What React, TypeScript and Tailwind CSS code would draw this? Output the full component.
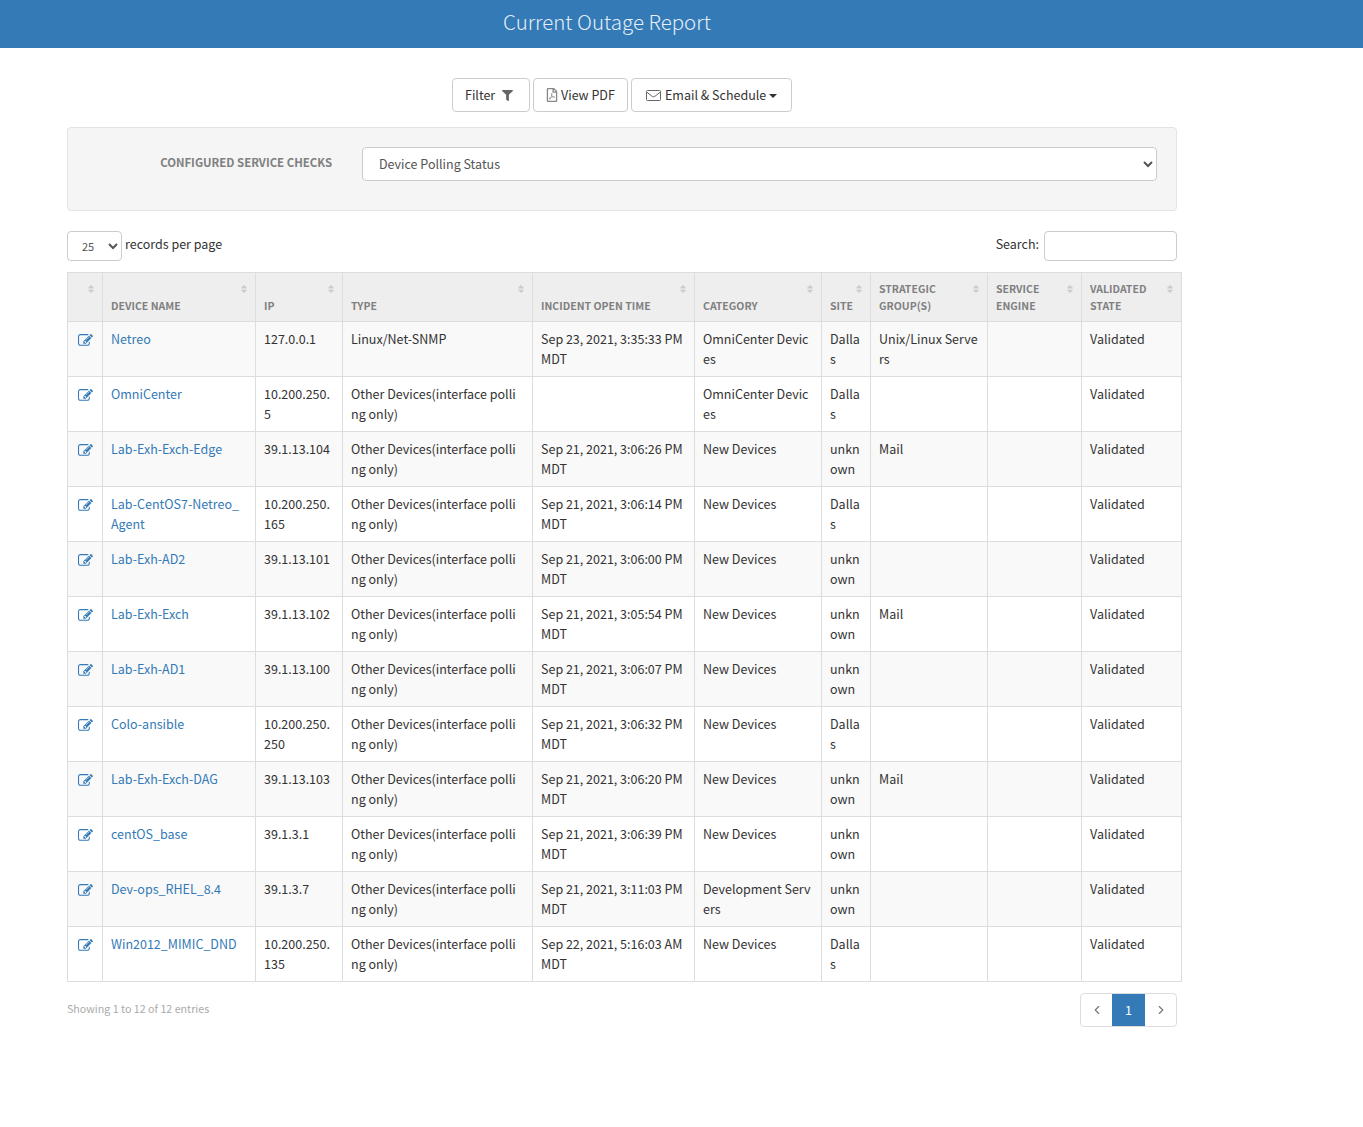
import { FaFilter, FaRegFilePdf, FaSort } from 'react-icons/fa';
import { ChevronLeft, ChevronRight } from 'lucide-react';

type Row = {
  name: string;
  ip: string;
  type: string;
  time: string;
  category: string;
  site: string;
  group: string;
};

const otherType = 'Other Devices(interface polling only)';

const rows: Row[] = [
  { name: 'Netreo', ip: '127.0.0.1', type: 'Linux/Net-SNMP', time: 'Sep 23, 2021, 3:35:33 PM MDT', category: 'OmniCenter Devices', site: 'Dallas', group: 'Unix/Linux Servers' },
  { name: 'OmniCenter', ip: '10.200.250.5', type: otherType, time: '', category: 'OmniCenter Devices', site: 'Dallas', group: '' },
  { name: 'Lab-Exh-Exch-Edge', ip: '39.1.13.104', type: otherType, time: 'Sep 21, 2021, 3:06:26 PM MDT', category: 'New Devices', site: 'unknown', group: 'Mail' },
  { name: 'Lab-CentOS7-Netreo_Agent', ip: '10.200.250.165', type: otherType, time: 'Sep 21, 2021, 3:06:14 PM MDT', category: 'New Devices', site: 'Dallas', group: '' },
  { name: 'Lab-Exh-AD2', ip: '39.1.13.101', type: otherType, time: 'Sep 21, 2021, 3:06:00 PM MDT', category: 'New Devices', site: 'unknown', group: '' },
  { name: 'Lab-Exh-Exch', ip: '39.1.13.102', type: otherType, time: 'Sep 21, 2021, 3:05:54 PM MDT', category: 'New Devices', site: 'unknown', group: 'Mail' },
  { name: 'Lab-Exh-AD1', ip: '39.1.13.100', type: otherType, time: 'Sep 21, 2021, 3:06:07 PM MDT', category: 'New Devices', site: 'unknown', group: '' },
  { name: 'Colo-ansible', ip: '10.200.250.250', type: otherType, time: 'Sep 21, 2021, 3:06:32 PM MDT', category: 'New Devices', site: 'Dallas', group: '' },
  { name: 'Lab-Exh-Exch-DAG', ip: '39.1.13.103', type: otherType, time: 'Sep 21, 2021, 3:06:20 PM MDT', category: 'New Devices', site: 'unknown', group: 'Mail' },
  { name: 'centOS_base', ip: '39.1.3.1', type: otherType, time: 'Sep 21, 2021, 3:06:39 PM MDT', category: 'New Devices', site: 'unknown', group: '' },
  { name: 'Dev-ops_RHEL_8.4', ip: '39.1.3.7', type: otherType, time: 'Sep 21, 2021, 3:11:03 PM MDT', category: 'Development Servers', site: 'unknown', group: '' },
  { name: 'Win2012_MIMIC_DND', ip: '10.200.250.135', type: otherType, time: 'Sep 22, 2021, 5:16:03 AM MDT', category: 'New Devices', site: 'Dallas', group: '' },
];

const columns = [
  { label: '', width: 'w-[35px]' },
  { label: 'Device Name', width: 'w-[153px]' },
  { label: 'IP', width: 'w-[87px]' },
  { label: 'Type', width: 'w-[190px]' },
  { label: 'Incident Open Time', width: 'w-[162px]' },
  { label: 'Category', width: 'w-[127px]' },
  { label: 'Site', width: 'w-[49px]' },
  { label: 'Strategic Group(s)', width: 'w-[117px]' },
  { label: 'Service Engine', width: 'w-[94px]' },
  { label: 'Validated State', width: 'w-[100px]' },
];

const cell = 'border border-[#ddd] pl-2 pr-2 pt-[7px] pb-[6px] align-top break-all leading-[20px]';
// these two wrap one letter earlier in the picture
const tightCell = 'border border-[#ddd] pl-2 pr-[13px] pt-[7px] pb-[6px] align-top break-all leading-[20px]';

// font awesome 4 pencil-square-o, the package only has the newer one
const EditIcon = () => (
  <svg viewBox="0 0 1792 1792" className="mt-[4px] ml-[2px] h-[15px] w-[15px] fill-[#337ab7]">
    <path d="M888 1184l116-116-152-152-116 116v56h96v96h56zm440-720q-16-16-33 1l-350 350q-17 17-1 33t33-1l350-350q17-17 1-33zm80 594v190q0 119-84.5 203.5t-203.5 84.5h-832q-119 0-203.5-84.5t-84.5-203.5v-832q0-119 84.5-203.5t203.5-84.5h832q63 0 117 25 15 7 18 23 3 17-9 29l-49 49q-14 14-32 8-23-6-45-6h-832q-66 0-113 47t-47 113v832q0 66 47 113t113 47h832q66 0 113-47t47-113v-126q0-13 9-22l64-64q15-15 35-7t20 29zm-96-738l288 288-672 672h-288v-288zm444 132l-92 92-288-288 92-92q28-28 68-28t68 28l152 152q28 28 28 68t-28 68z" />
  </svg>
);

const MailIcon = () => (
  <svg viewBox="0 0 15 11" className="h-[11px] w-[15px] fill-none stroke-[#666]">
    <rect x="0.5" y="0.5" width="14" height="10" rx="1" />
    <path d="M0.8 2.2 L6.2 6.4 Q7.5 7.3 8.8 6.4 L14.2 2.2" />
  </svg>
);

const App = () => {
  return (
    <div className="min-h-[1127px] bg-white text-[12.5px] leading-[20px] text-[#333] font-['Noto_Sans_CJK_SC','Noto_Sans',sans-serif]">
      <header className="h-12 bg-[#337ab7] pl-[503px] pt-[6px] text-[20.5px] leading-[30px] font-light text-[#e6eef6]">
        Current Outage Report
      </header>

      <div className="w-[1115px] ml-[67px]">
        <div className="w-[1110px] flex justify-center gap-[3px] mt-[30px]">
          <button className="h-[34px] w-[78px] flex items-center pl-3 gap-[7px] rounded border border-[#ccc] bg-white">
            Filter <FaFilter className="text-[11px] text-[#666]" />
          </button>
          <button className="h-[34px] w-[95px] flex items-center pl-[11px] gap-[2px] rounded border border-[#ccc] bg-white">
            <FaRegFilePdf className="text-[14px] text-[#888]" /> View PDF
          </button>
          <button className="h-[34px] w-[161px] flex items-center pl-[14px] gap-[4px] rounded border border-[#ccc] bg-white">
            <MailIcon /> Email &amp; Schedule
            <span className="-ml-[1px] mt-[2px] border-x-4 border-t-4 border-x-transparent border-t-[#333]" />
          </button>
        </div>

        <div className="w-[1110px] h-[84px] mt-[15px] flex items-start rounded border border-[#e3e3e3] bg-[#f5f5f5] pt-[19px]">
          <label className="w-[264px] pt-[5px] text-right text-[11.4px] font-bold uppercase text-[#808080]">
            Configured Service Checks
          </label>
          <select className="ml-[30px] h-[34px] w-[795px] rounded border border-[#ccc] bg-white pl-3 pr-1 text-[#555] pb-[1px]">
            <option>Device Polling Status</option>
          </select>
        </div>

        <div className="w-[1110px] flex items-start justify-between mt-[20px]">
          <div className="flex items-start gap-[3px]">
            <select className="h-[30px] w-[55px] rounded border border-[#ccc] bg-white pl-[10px] pb-[1px] text-[11px] text-[#555]">
              <option>25</option>
            </select>
            <span className="leading-[26px]">records per page</span>
          </div>
          <div className="flex items-start gap-[5px]">
            <span className="leading-[26px]">Search:</span>
            <input className="h-[30px] w-[133px] rounded border border-[#ccc] bg-white" />
          </div>
        </div>

        <table className="mt-[11px] w-[1114px] table-fixed border-collapse">
          <thead>
            <tr className="h-[49px] bg-[#eee]">
              {columns.map((col, i) => (
                <th
                  key={i}
                  className={`${col.width} relative border border-[#ddd] px-2 pb-[7px] align-bottom text-left text-[10.5px] font-bold uppercase leading-[17px] text-[#808080]`}
                >
                  <FaSort className="absolute right-[6px] top-[11px] text-[10px] text-[#ccc]" />
                  <span className="block pr-4">{col.label}</span>
                </th>
              ))}
            </tr>
          </thead>
          <tbody>
            {rows.map((row, i) => (
              <tr key={row.name} className={`h-[55px] ${i % 2 === 0 ? 'bg-[#f9f9f9]' : 'bg-white'}`}>
                <td className={cell}>
                  <EditIcon />
                </td>
                <td className={`${tightCell} text-[#337ab7]`}>{row.name}</td>
                <td className={cell}>{row.ip}</td>
                <td className={tightCell}>{row.type}</td>
                <td className={cell}>{row.time}</td>
                <td className={cell}>{row.category}</td>
                <td className={cell}>{row.site}</td>
                <td className={cell}>{row.group}</td>
                <td className={cell}></td>
                <td className={cell}>Validated</td>
              </tr>
            ))}
          </tbody>
        </table>

        <div className="w-[1110px] flex items-start justify-between mt-[11px]">
          <span className="pt-[6px] text-[10.7px] text-[#aaa]">Showing 1 to 12 of 12 entries</span>
          <div className="flex h-[34px] w-[97px] rounded border border-[#ddd] overflow-hidden">
            <span className="flex w-[31px] items-center justify-center text-[#777]"><ChevronLeft size={14} /></span>
            <span className="flex w-[33px] items-center justify-center bg-[#337ab7] text-white">1</span>
            <span className="flex w-[31px] items-center justify-center text-[#777]"><ChevronRight size={14} /></span>
          </div>
        </div>
      </div>
    </div>
  );
};

export default App;
